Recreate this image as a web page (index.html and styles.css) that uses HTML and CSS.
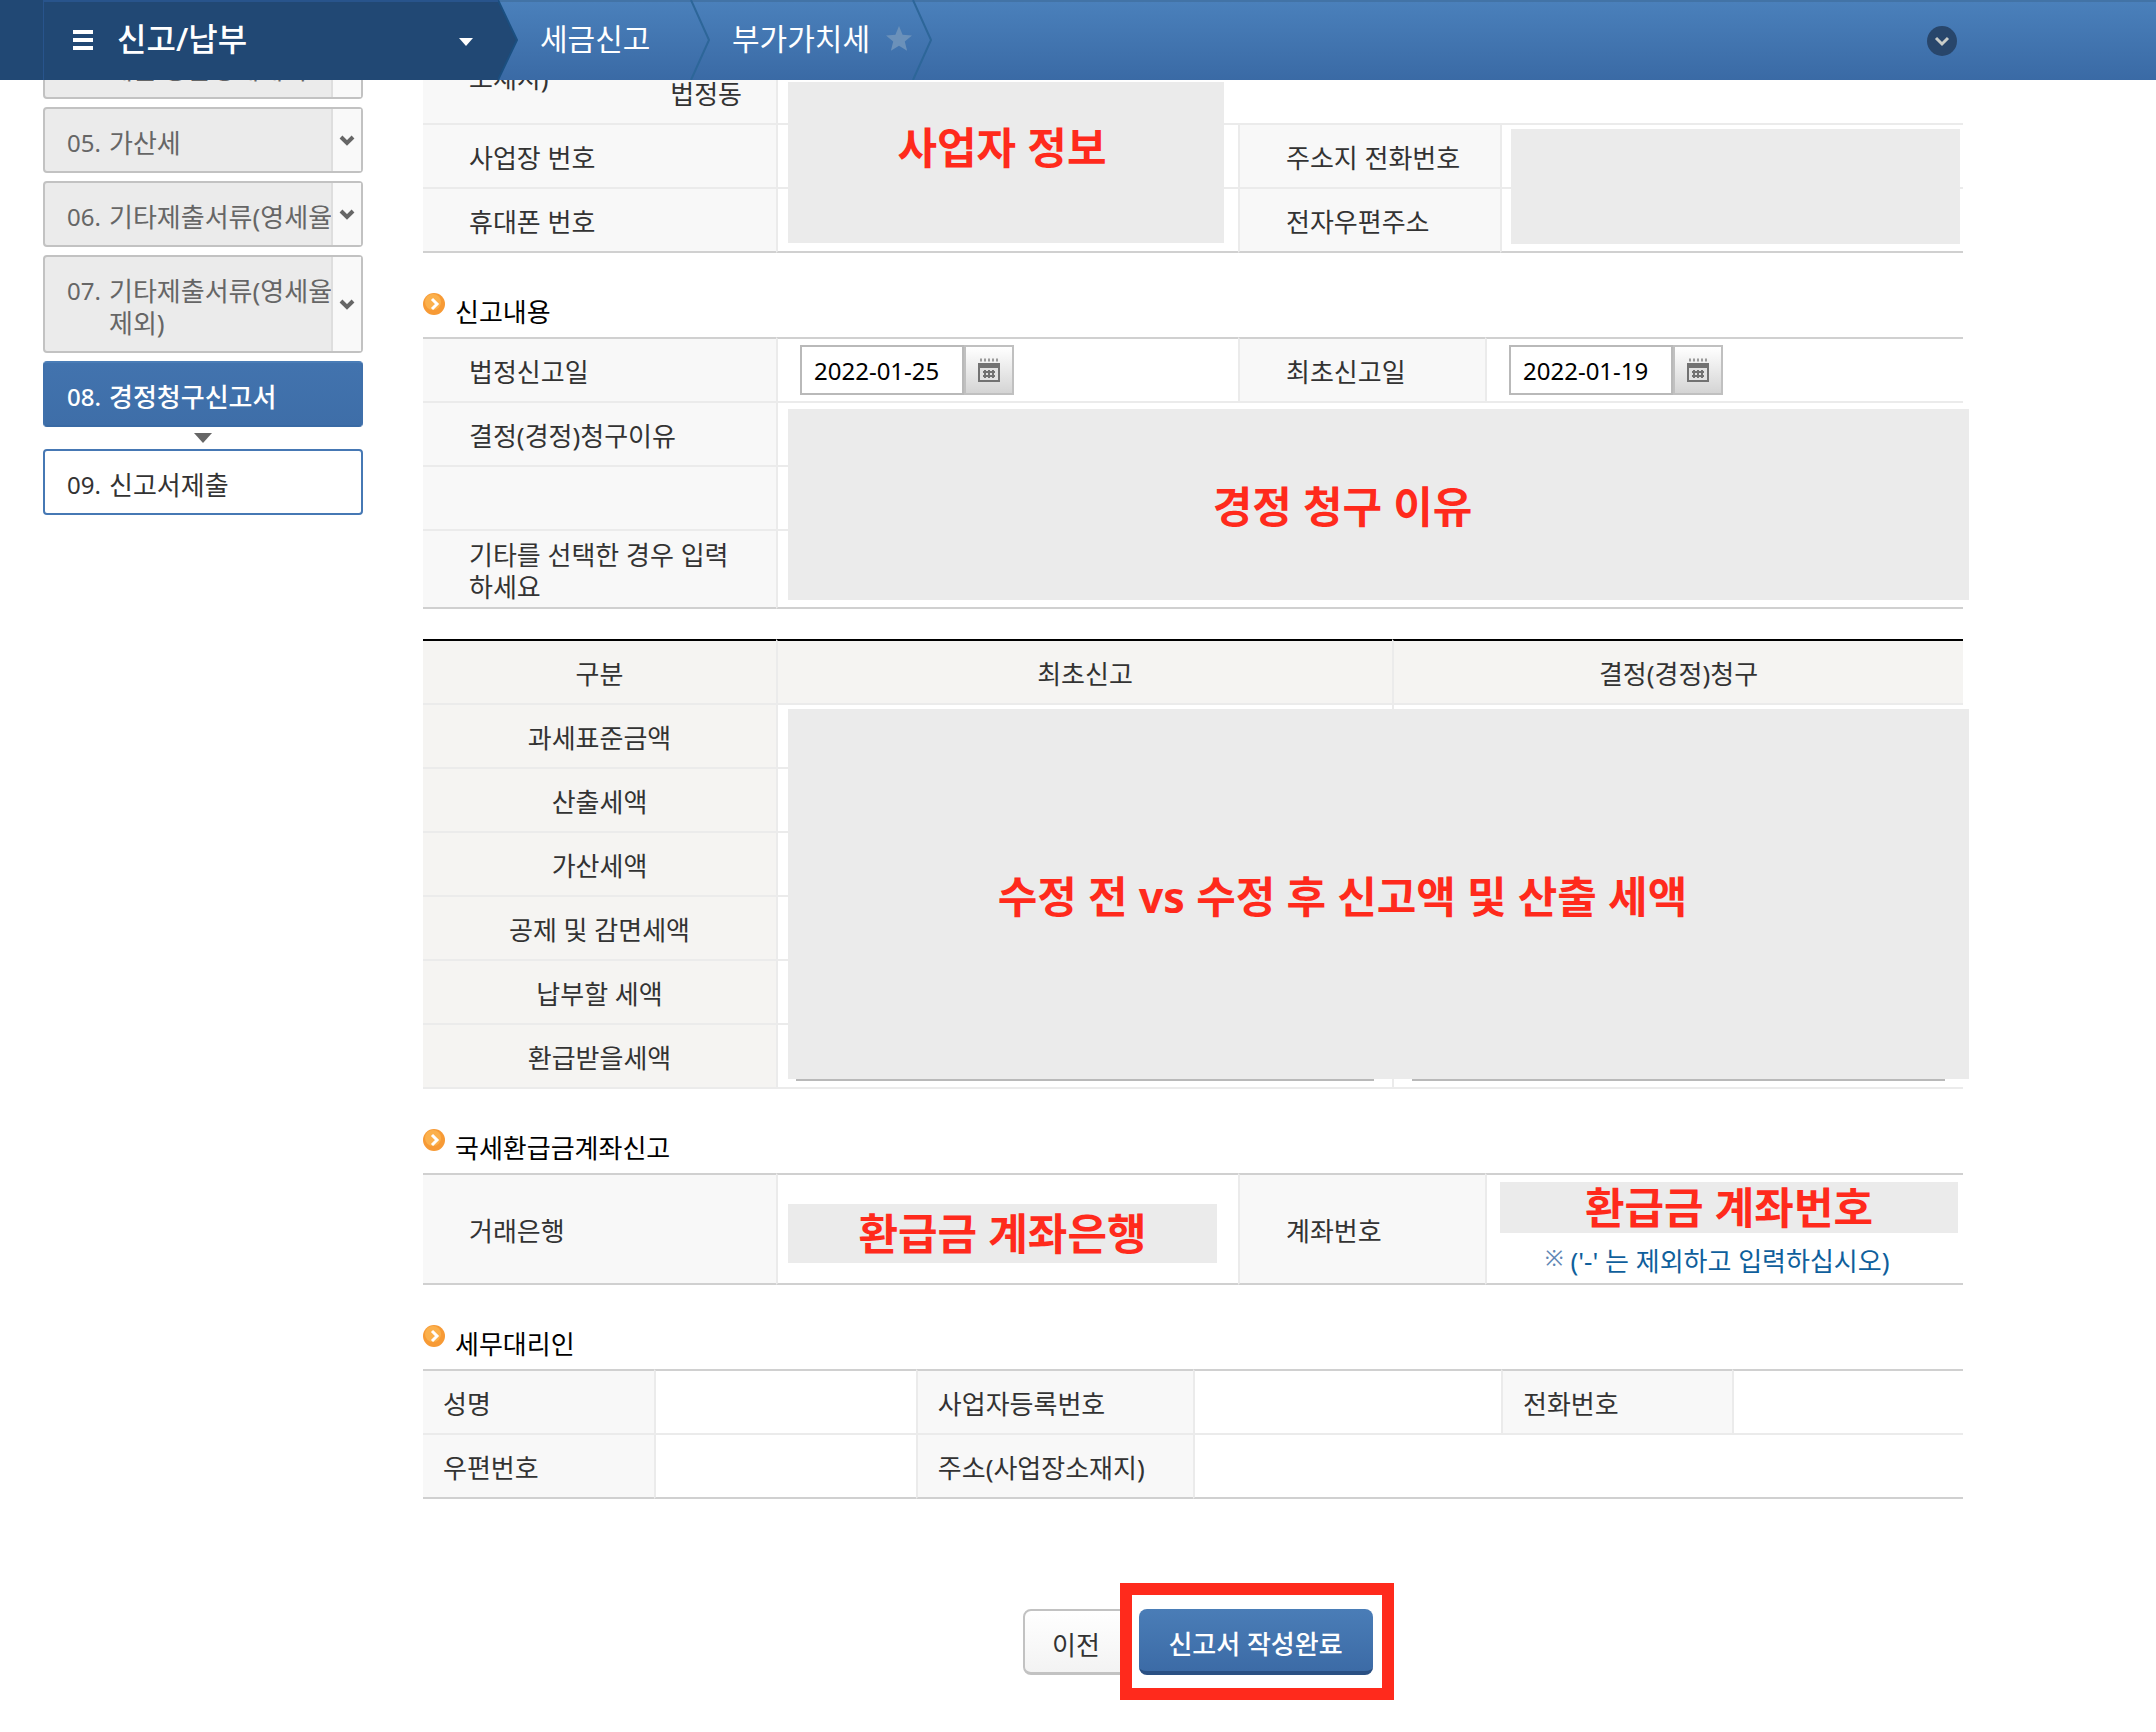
FILE: index.html
```html
<!DOCTYPE html>
<html lang="ko">
<head>
<meta charset="utf-8">
<meta name="viewport" content="width=device-width, initial-scale=1">
<title>부가가치세 신고</title>
<link rel="stylesheet" href="styles.css">
</head>
<body>
<header class="topbar">
  <button type="button" class="menu">
    <svg class="menu-bars" viewBox="0 0 20 20" aria-hidden="true"><path d="M0 0h20v4H0zM0 8h20v4H0zM0 16h20v4H0z"/></svg>
    <span class="menu-title">신고/납부</span>
    <svg class="menu-caret" viewBox="0 0 14 8" aria-hidden="true"><path d="M0 0h14L7 8z"/></svg>
  </button>
  <svg class="tip" viewBox="0 0 20 80" aria-hidden="true"><path d="M0 0L19 40L0 80z" fill="#214874"/><path d="M0 0L19 40L0 80" fill="none" stroke="#1b4f80" stroke-width="2"/></svg>
  <nav class="crumbs" aria-label="현재 위치">
    <a href="#" class="crumb crumb-first">세금신고</a>
    <svg class="tip" viewBox="0 0 20 80" aria-hidden="true"><path d="M1 0L19 40L1 80" fill="none" stroke="#2d6699" stroke-width="2"/></svg>
    <a href="#" class="crumb crumb-last">부가가치세
      <svg class="star" viewBox="0 0 26 26" aria-hidden="true"><path d="M13 0l3.6 8.700 9.400.700-7.200 6.100 2.300 9.300L13 19.800 4.900 24.800l2.300-9.300L0 9.400l9.400-.7z"/></svg></a>
    <svg class="tip" viewBox="0 0 20 80" aria-hidden="true"><path d="M1 0L19 40L1 80" fill="none" stroke="#2d6699" stroke-width="2"/></svg>
  </nav>
  <button type="button" class="expand" aria-label="펼치기">
    <svg viewBox="0 0 30 30" aria-hidden="true"><circle cx="15" cy="15" r="15" fill="#28466b"/><path d="M9 12l6 6 6-6" fill="none" stroke="#c9ccc8" stroke-width="3"/></svg>
  </button>
</header>

<div class="page">
  <aside class="side">
    <ol class="steps">
      <li class="step"><a href="#" class="step-link"><span class="num">04.</span><span class="step-name">제출 공급명세세서</span></a><button type="button" class="step-open" aria-label="04 펼치기"><svg viewBox="0 0 16 12" aria-hidden="true"><path d="M2 2l6 6 6-6"/></svg></button></li>
      <li class="step"><a href="#" class="step-link"><span class="num">05.</span><span class="step-name">가산세</span></a><button type="button" class="step-open" aria-label="05 펼치기"><svg viewBox="0 0 16 12" aria-hidden="true"><path d="M2 2l6 6 6-6"/></svg></button></li>
      <li class="step"><a href="#" class="step-link"><span class="num">06.</span><span class="step-name">기타제출서류(영세율</span></a><button type="button" class="step-open" aria-label="06 펼치기"><svg viewBox="0 0 16 12" aria-hidden="true"><path d="M2 2l6 6 6-6"/></svg></button></li>
      <li class="step"><a href="#" class="step-link"><span class="num">07.</span><span class="step-name">기타제출서류(영세율<br>제외)</span></a><button type="button" class="step-open" aria-label="07 펼치기"><svg viewBox="0 0 16 12" aria-hidden="true"><path d="M2 2l6 6 6-6"/></svg></button></li>
      <li class="step step-current"><a href="#" class="step-link" aria-current="step"><span class="num">08.</span><span class="step-name">경정청구신고서</span></a></li>
      <li class="step-arrow" aria-hidden="true"><svg viewBox="0 0 18 10"><path d="M0 0h18L9 10z"/></svg></li>
      <li class="step step-next"><a href="#" class="step-link"><span class="num">09.</span><span class="step-name">신고서제출</span></a></li>
    </ol>
  </aside>

  <main class="main">
    <table class="form">
      <colgroup><col class="c353"><col class="c462"><col class="c262"><col></colgroup>
      <tbody>
        <tr class="row-first"><th scope="row"><div class="split"><span>소재지)</span><span class="split-sub">법정동</span></div></th>
          <td colspan="3" class="holder"><div class="mask mask-biz">사업자 정보</div></td></tr>
        <tr><th scope="row">사업장 번호</th><td></td><th scope="row">주소지 전화번호</th>
          <td class="holder"><div class="mask mask-contact"></div></td></tr>
        <tr><th scope="row">휴대폰 번호</th><td></td><th scope="row">전자우편주소</th><td></td></tr>
      </tbody>
    </table>

    <section>
      <h2 class="title"><svg class="bullet" viewBox="0 0 22 22" aria-hidden="true"><circle cx="11" cy="11" r="11" fill="#f79a35"/><circle cx="10" cy="9" r="8" fill="#fbb04c"/><path d="M9 6l5 5-5 5" fill="none" stroke="#fff" stroke-width="3"/></svg>신고내용</h2>
      <div class="covered">
        <table class="form">
          <colgroup><col class="c353"><col class="c462"><col class="c247"><col></colgroup>
          <tbody>
            <tr><th scope="row"><label for="due">법정신고일</label></th>
              <td><div class="date"><input id="due" type="text" value="2022-01-25"><button type="button" aria-label="법정신고일 달력"><svg viewBox="0 0 22 24" aria-hidden="true"><path d="M2 2h18" stroke="#999" stroke-width="3" stroke-dasharray="2 2"/><path d="M0 5h22v19H0z" fill="#727272"/><path d="M2 10h18v12H2z" fill="#e2e2e2"/><path d="M5 14h12M5 18h12M7 12v8M11 12v8M15 12v8" stroke="#727272" stroke-width="2"/></svg></button></div></td>
              <th scope="row"><label for="first">최초신고일</label></th>
              <td><div class="date"><input id="first" type="text" value="2022-01-19"><button type="button" aria-label="최초신고일 달력"><svg viewBox="0 0 22 24" aria-hidden="true"><path d="M2 2h18" stroke="#999" stroke-width="3" stroke-dasharray="2 2"/><path d="M0 5h22v19H0z" fill="#727272"/><path d="M2 10h18v12H2z" fill="#e2e2e2"/><path d="M5 14h12M5 18h12M7 12v8M11 12v8M15 12v8" stroke="#727272" stroke-width="2"/></svg></button></div></td></tr>
            <tr><th scope="row">결정(경정)청구이유</th><td colspan="3"></td></tr>
            <tr><th scope="row"></th><td colspan="3"></td></tr>
            <tr class="row-tall"><th scope="row">기타를 선택한 경우 입력<br>하세요</th><td colspan="3"></td></tr>
          </tbody>
        </table>
        <div class="mask mask-reason">경정 청구 이유</div>
      </div>
    </section>

    <div class="covered covered-tax">
      <table class="form tax">
        <colgroup><col class="c353"><col class="c616"><col></colgroup>
        <thead><tr><th scope="col">구분</th><th scope="col">최초신고</th><th scope="col">결정(경정)청구</th></tr></thead>
        <tbody>
          <tr><th scope="row">과세표준금액</th><td></td><td></td></tr>
          <tr><th scope="row">산출세액</th><td></td><td></td></tr>
          <tr><th scope="row">가산세액</th><td></td><td></td></tr>
          <tr><th scope="row">공제 및 감면세액</th><td></td><td></td></tr>
          <tr><th scope="row">납부할 세액</th><td></td><td></td></tr>
          <tr><th scope="row">환급받을세액</th><td><input class="amount" type="text" aria-label="최초신고 환급받을세액"></td><td><input class="amount" type="text" aria-label="결정(경정)청구 환급받을세액"></td></tr>
        </tbody>
      </table>
      <div class="mask mask-tax">수정 전 vs 수정 후 신고액 및 산출 세액</div>
    </div>

    <section>
      <h2 class="title"><svg class="bullet" viewBox="0 0 22 22" aria-hidden="true"><circle cx="11" cy="11" r="11" fill="#f79a35"/><circle cx="10" cy="9" r="8" fill="#fbb04c"/><path d="M9 6l5 5-5 5" fill="none" stroke="#fff" stroke-width="3"/></svg>국세환급금계좌신고</h2>
      <table class="form">
        <colgroup><col class="c353"><col class="c462"><col class="c247"><col></colgroup>
        <tbody>
          <tr class="row-account"><th scope="row">거래은행</th>
            <td class="bank"><div class="mask-flow mask-bank">환급금 계좌은행</div></td>
            <th scope="row">계좌번호</th>
            <td class="account"><div class="mask-flow">환급금 계좌번호</div>
              <p class="note"><span class="note-mark">※</span>('-' 는 제외하고 입력하십시오)</p></td></tr>
        </tbody>
      </table>
    </section>

    <section>
      <h2 class="title"><svg class="bullet" viewBox="0 0 22 22" aria-hidden="true"><circle cx="11" cy="11" r="11" fill="#f79a35"/><circle cx="10" cy="9" r="8" fill="#fbb04c"/><path d="M9 6l5 5-5 5" fill="none" stroke="#fff" stroke-width="3"/></svg>세무대리인</h2>
      <table class="form agent">
        <colgroup><col class="p15"><col class="p17"><col class="p18"><col class="p20"><col class="p15"><col></colgroup>
        <tbody>
          <tr><th scope="row">성명</th><td></td><th scope="row">사업자등록번호</th><td></td><th scope="row">전화번호</th><td></td></tr>
          <tr><th scope="row">우편번호</th><td></td><th scope="row">주소(사업장소재지)</th><td colspan="3"></td></tr>
        </tbody>
      </table>
    </section>

    <div class="actions">
      <button type="button" class="btn">이전</button>
      <div class="spot"><button type="button" class="btn btn-primary">신고서 작성완료</button></div>
    </div>
  </main>
</div>
</body>
</html>
```
FILE: styles.css
```css
* { box-sizing: border-box; }

body {
  margin: 0;
  background: #fff;
  color: #333;
  font-family: "Noto Sans", "Noto Sans CJK KR", sans-serif;
  font-size: 26px;
  line-height: 32px;
}

button, input { font: inherit; }
button { cursor: pointer; }
a { color: inherit; text-decoration: none; }
svg { display: block; flex: none; }

/* Top bar */
.topbar {
  position: fixed;
  z-index: 10;
  top: 0;
  left: 0;
  right: 0;
  display: flex;
  height: 80px;
  padding-right: 199px;
  background: linear-gradient(#4a80bb, #3a6aa5);
  border-top: 2px solid #4273a6;
  align-items: center;
  color: #fff;
}
.topbar::before {
  content: "";
  width: 43px;
  height: 80px;
  margin-top: -2px;
  background: #214874;
}
.menu {
  display: flex;
  align-items: center;
  width: 455px;
  height: 80px;
  margin-top: -2px;
  padding: 0 25px 2px 29px;
  border: 0;
  border-top: 2px solid #28548c;
  border-left: 1px solid #28548c;
  background: #214874;
  color: #fff;
}
.menu svg { fill: #fff; }
.menu-bars { width: 20px; height: 20px; }
.menu-title {
  flex: 1;
  margin: 0 24px;
  padding-bottom: 2px;
  font-size: 32px;
  font-weight: 500;
  line-height: 40px;
  text-align: left;
}
.menu-caret { width: 14px; height: 8px; margin-top: 4px; }
.tip { width: 20px; height: 80px; margin-top: -2px; }
.crumbs { display: flex; flex: 1; align-items: center; }
.crumb { display: flex; padding-bottom: 4px; font-size: 30px; align-items: center; }
.crumb-first { width: 172px; padding-left: 22px; }
.crumb-last { width: 202px; padding-left: 22px; justify-content: space-between; }
.star { width: 26px; height: 26px; fill: #6b91ba; }
.expand { padding: 0; border: 0; background: none; }
.expand svg { width: 30px; height: 30px; }

/* Page columns */
.page {
  display: flex;
  gap: 60px;
  align-items: flex-start;
  padding: 0 193px 30px 43px;
}
.side { width: 320px; flex: none; padding-top: 33px; }
.main { flex: 1; min-width: 0; }

/* Step list */
.steps {
  display: flex;
  flex-direction: column;
  gap: 8px;
  margin: 0;
  padding: 0;
  list-style: none;
}
.step {
  display: flex;
  border: 2px solid #c2c2c2;
  border-radius: 4px;
  background: #ebebeb;
  color: #666;
}
.step-link {
  display: flex;
  flex: 1;
  min-width: 0;
  padding: 18px 0 12px 22px;
  white-space: nowrap;
}
.num { width: 42px; flex: none; font-size: 24px; }
.step-open {
  display: flex;
  width: 30px;
  padding: 2px 0 0;
  border: 0;
  border-left: 2px solid #dedede;
  background: #f9f9f9;
  align-items: center;
  justify-content: center;
}
.step-open svg { width: 16px; height: 12px; fill: none; stroke: #666; stroke-width: 4; }
.step-current {
  border-color: #4a7db7 #3f70ab #396aa4;
  background: linear-gradient(#4273ae, #3e6ea8);
  color: #fff;
  font-weight: 500;
}
.step-arrow { margin: -2px auto; }
.step-arrow svg { width: 18px; height: 10px; fill: #666; }
.step-next { border-color: #4678b4; background: #fff; color: #333; }

/* Form tables */
.form {
  width: 100%;
  border-collapse: separate;
  border-spacing: 0;
  table-layout: fixed;
}
.c353 { width: 353px; }
.c462 { width: 462px; }
.c262 { width: 262px; }
.c247 { width: 247px; }
.c616 { width: 616px; }
.p15 { width: 15%; }
.p17 { width: 17%; }
.p18 { width: 18%; }
.p20 { width: 20%; }

.form th, .form td {
  height: 64px;
  padding: 0 22px;
  border-bottom: 2px solid #ebebeb;
  text-align: left;
  vertical-align: middle;
}
.form th {
  padding: 4px 30px 0 46px;
  background: #f8f8f8;
  font-weight: 400;
}
.form th:not(:first-child), .form td { border-left: 2px solid #ebebeb; }
.form tr:last-child > * { border-bottom-color: #d0d0d0; }
section .form tr:first-child > * { height: 66px; border-top: 2px solid #d0d0d0; }
.form .row-first > * { height: 125px; padding-top: 0; }
section .form tr.row-tall > * { height: 78px; }
section .form tr.row-account:first-child > * { height: 112px; }
.form.agent th { padding-left: 20px; padding-right: 0; }

.split {
  display: flex;
  height: 123px;
  padding: 62px 4px 0 0;
  justify-content: space-between;
}
.split-sub { padding-top: 16px; }

.form.tax th { background: #f5f4f2; padding: 4px 0 0; text-align: center; }
.form.tax thead th { height: 66px; border-top: 2px solid #000; border-bottom-color: #ebebeb; }
.form.tax td { padding: 0 18px; }
.form.tax tr:last-child > * { border-bottom-color: #ebebeb; }

.title {
  display: flex;
  gap: 10px;
  margin: 40px 0 0;
  height: 44px;
  color: #000;
  font-size: 26px;
  font-weight: 400;
  line-height: 38px;
}
.bullet { width: 22px; height: 22px; }

/* Inputs */
.date { display: flex; height: 50px; }
.date input {
  width: 164px;
  padding: 2px 12px 0;
  border: 2px solid #b9b9b9;
  background: #fff;
  color: #000;
  font-size: 24px;
}
.date button {
  display: flex;
  width: 50px;
  padding: 0;
  border: 2px solid #c0c0c0;
  background: linear-gradient(#fff, #d4d4d4);
  align-items: center;
  justify-content: center;
}
.date svg { width: 22px; height: 24px; }
.amount {
  display: block;
  width: 100%;
  height: 50px;
  border: 2px solid #b9b9b9;
  background: #fff;
}

/* Grey covers with red captions */
.mask, .mask-flow {
  display: flex;
  background: #ebebeb;
  color: #ff2a1c;
  font-size: 43px;
  font-weight: 700;
  line-height: 51px;
  align-items: center;
  justify-content: center;
}
.mask { position: absolute; z-index: 1; }
.holder, .covered { position: relative; }
.mask-biz { top: 82px; left: 10px; width: 436px; height: 161px; padding: 0 8px 30px 0; }
.mask-contact { top: 4px; left: 9px; right: 3px; height: 115px; }
.mask-reason { top: 72px; bottom: 9px; left: 365px; right: -6px; padding: 4px 72px 0 0; }
.mask-tax { top: 70px; bottom: 10px; left: 365px; right: -6px; padding: 4px 72px 0 0; }
.covered-tax { margin-top: 30px; }

.form .bank { padding: 8px 21px 0 10px; }
.mask-bank { height: 59px; }
.form .account { padding: 4px 5px 0 13px; }
.note {
  display: flex;
  gap: 7px;
  margin: 12px 0 4px;
  padding-left: 45px;
  color: #0f5f9c;
  white-space: nowrap;
}
.note-mark { font-size: 22px; line-height: 24px; color: #5f86b4; }

/* Bottom buttons */
.actions {
  display: flex;
  margin-top: 84px;
  padding-left: 30px;
  align-items: center;
  justify-content: center;
}
.btn {
  height: 66px;
  width: 107px;
  padding: 8px 0 0;
  border: 2px solid #c2c2c2;
  border-bottom-width: 3px;
  border-radius: 8px;
  background: linear-gradient(#fff, #f3f3f3);
  color: #333;
}
.spot {
  margin-left: -10px;
  padding: 14px 9px 13px 7px;
  border: 12px solid #ff2a1c;
  background: #fff;
}
.btn-primary {
  display: block;
  width: 234px;
  border: 0;
  border-bottom: 4px solid #2a5083;
  background: linear-gradient(#4a7db7, #3c6ba6);
  color: #fff;
  font-weight: 500;
}
```
